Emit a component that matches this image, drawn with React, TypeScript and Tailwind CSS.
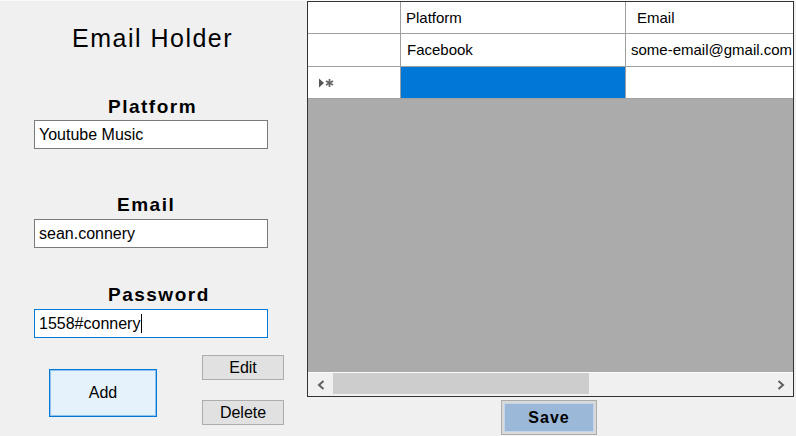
import React from "react";

function TextBox({ value, focused, caret }: { value: string; focused?: boolean; caret?: boolean }) {
  return (
    <div
      className={`ml-[34px] w-[234px] h-[29px] bg-white flex items-center pl-[4px] text-[16px] text-black border ${
        focused ? "border-[#0078d7]" : "border-[#7a7a7a]"
      }`}
    >
      <span className="whitespace-nowrap">{value}</span>
      {caret && <span className="ml-px w-px h-[19px] bg-black" />}
    </div>
  );
}

function NewRowGlyph() {
  return (
    <svg width="15" height="10" viewBox="0 0 15 10">
      <path d="M0 0.5 L5 5 L0 9.5 Z" fill="#555" />
      <path
        d="M10.5 1 V9 M7 3 L14 7 M14 3 L7 7"
        stroke="#666"
        strokeWidth="1.7"
      />
    </svg>
  );
}

function Chevron({ dir }: { dir: "left" | "right" }) {
  return (
    <svg width="8" height="10" viewBox="0 0 8 10">
      <path
        d={dir === "left" ? "M6.5 1 L2 5 L6.5 9" : "M1.5 1 L6 5 L1.5 9"}
        fill="none"
        stroke="#606060"
        strokeWidth="2"
      />
    </svg>
  );
}

export default function App() {
  return (
    <div className="w-[796px] h-[436px] bg-[#f0f0f0] overflow-hidden flex flex-col text-black font-['Liberation_Sans',Arial,sans-serif]">
      <div className="h-px bg-[#fafafa]" />
      <div className="flex flex-1">
        {/* form */}
        <div className="w-[307px] flex flex-col">
          <div className="mt-[23px] pl-[72px] text-[25px] leading-[28px] tracking-[1.5px]">Email Holder</div>

          <div className="mt-[44px] pl-[108px] text-[19px] leading-[22px] font-bold tracking-[1.5px]">Platform</div>
          <div className="mt-[2px]">
            <TextBox value="Youtube Music" />
          </div>

          <div className="mt-[45px] pl-[117px] text-[19px] leading-[22px] font-bold tracking-[1.5px]">Email</div>
          <div className="mt-[3px]">
            <TextBox value="sean.connery" />
          </div>

          <div className="mt-[36px] pl-[108px] text-[19px] leading-[22px] font-bold tracking-[1.5px]">Password</div>
          <div className="mt-[3px]">
            <TextBox value="1558#connery" focused caret />
          </div>

          <div className="mt-[17px] flex">
            <button className="mt-[14px] ml-[49px] w-[108px] h-[48px] bg-[#e5f1fb] border border-[#0078d7] shadow-[inset_0_0_0_1px_#8fc0ee] text-[16px] flex items-center justify-center">
              Add
            </button>
            <div className="ml-[45px] flex flex-col">
              <button className="w-[82px] h-[25px] bg-[#e1e1e1] border border-[#adadad] text-[16px] flex items-center justify-center pt-px">
                Edit
              </button>
              <button className="mt-[20px] w-[82px] h-[25px] bg-[#e1e1e1] border border-[#adadad] text-[16px] flex items-center justify-center pt-px">
                Delete
              </button>
            </div>
          </div>
        </div>

        {/* grid */}
        <div className="w-[489px] flex flex-col">
          <div className="w-[487px] h-[396px] border border-[#333] bg-[#ababab] flex flex-col overflow-hidden text-[15px]">
            <div className="h-[32px] flex bg-white border-b border-[#a0a0a0] shrink-0">
              <div className="w-[93px] border-r border-[#a0a0a0]" />
              <div className="w-[225px] border-r border-[#a0a0a0] pl-[5px] pt-[2px] flex items-center">Platform</div>
              <div className="flex-1 pl-[11px] pt-[2px] flex items-center">Email</div>
            </div>
            <div className="h-[33px] flex bg-white border-b border-[#a0a0a0] shrink-0">
              <div className="w-[93px] border-r border-[#a0a0a0]" />
              <div className="w-[225px] border-r border-[#a0a0a0] pl-[6px] flex items-center">Facebook</div>
              <div className="flex-1 pl-[5px] flex items-center overflow-hidden whitespace-nowrap">some-email@gmail.com</div>
            </div>
            <div className="h-[32px] flex bg-white border-b border-[#a0a0a0] shrink-0">
              <div className="w-[93px] border-r border-[#a0a0a0] pl-[11px] flex items-center">
                <NewRowGlyph />
              </div>
              <div className="w-[225px] border-r border-[#a0a0a0] bg-[#0078d7]" />
              <div className="flex-1" />
            </div>
            <div className="flex-1" />
            <div className="h-[24px] bg-[#f0f0f0] border-t border-[#fafafa] flex shrink-0">
              <div className="w-[25px] flex items-center justify-center">
                <Chevron dir="left" />
              </div>
              <div className="w-[256px] h-[21px] bg-[#cdcdcd]" />
              <div className="flex-1" />
              <div className="w-[24px] flex items-center justify-center">
                <Chevron dir="right" />
              </div>
            </div>
          </div>

          <button className="mt-[3px] ml-[194px] w-[96px] h-[35px] bg-[#d9d9d9] border border-[#adadad] p-[2px] flex">
            <div className="flex-1 bg-[#9bb8d8] border border-[#c3d5ea] flex items-center justify-center text-[16px] font-bold tracking-[1px]">
              Save
            </div>
          </button>
        </div>
      </div>
    </div>
  );
}
